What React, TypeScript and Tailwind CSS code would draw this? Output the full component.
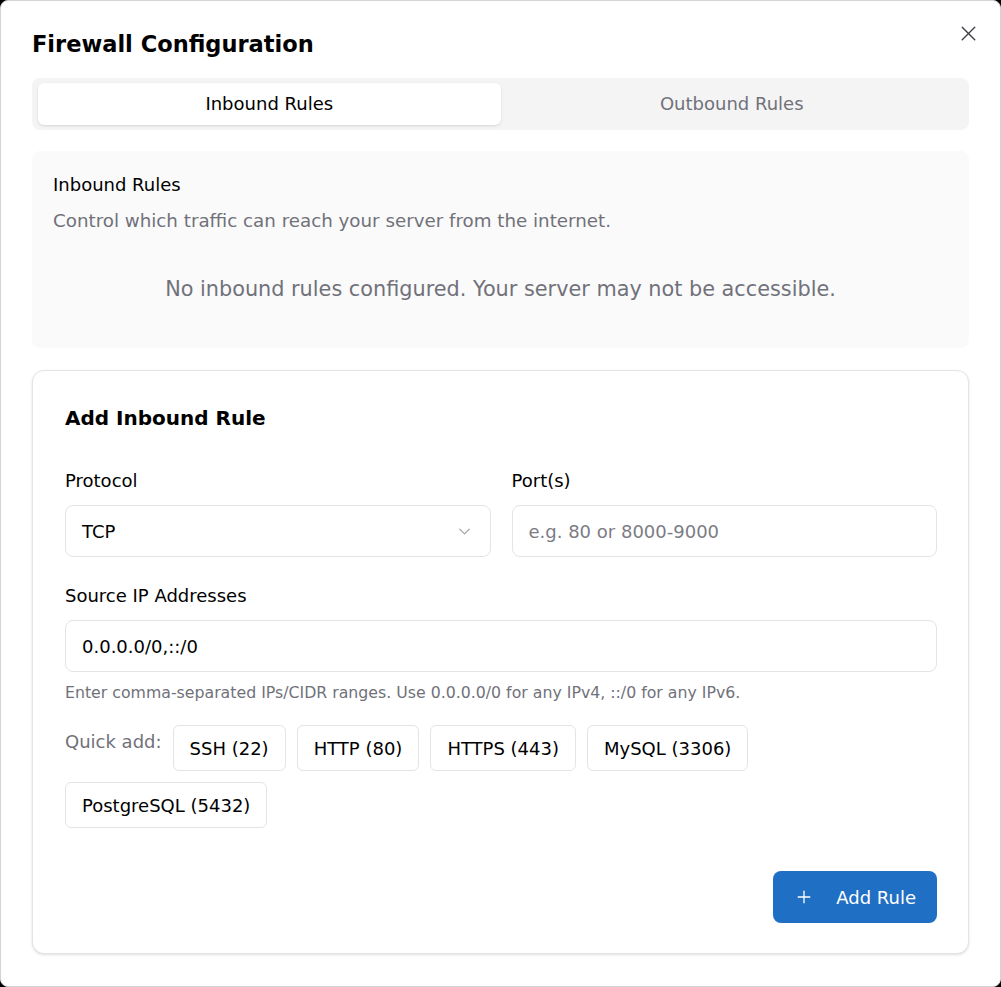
import { X, ChevronDown, Plus } from "lucide-react";

const quickAdds = ["SSH (22)", "HTTP (80)", "HTTPS (443)", "MySQL (3306)", "PostgreSQL (5432)"];

function FirewallDialog() {
  return (
    <div className="relative flex h-full flex-col rounded-lg border border-[#d4d4d8] bg-white px-[31px] pt-[28px] pb-8">
      <button className="absolute right-[19px] top-[20px] text-[#3f3f46]">
        <X size={25} strokeWidth={1.35} />
      </button>

      <h2 className="text-[22.5px] font-bold leading-[30px] text-black">Firewall Configuration</h2>

      {/* tabs */}
      <div className="mt-[19px] grid h-[52px] grid-cols-2 rounded-lg bg-[#f4f4f5] px-[6px] py-[5px]">
        <button className="rounded-md bg-white text-[18px] text-black shadow-sm">Inbound Rules</button>
        <button className="text-[18px] text-[#71717a]">Outbound Rules</button>
      </div>

      {/* current rules */}
      <div className="mt-[21px] h-[198px] rounded-lg bg-[#fafafa] px-[21px] pt-[20px]">
        <div className="text-[18px] leading-[27px] text-black">Inbound Rules</div>
        <p className="mt-[9px] text-[18.25px] leading-[27px] text-[#71717a]">
          Control which traffic can reach your server from the internet.
        </p>
        <p className="mt-[40px] text-center text-[20.8px] leading-[30px] text-[#71717a]">
          No inbound rules configured. Your server may not be accessible.
        </p>
      </div>

      {/* add rule form */}
      <div className="mt-[22px] rounded-xl border border-[#e4e4e7] bg-white pl-8 pr-[31px] pt-[33px] pb-[30px] shadow-sm">
        <h3 className="text-[20px] font-bold leading-[28px] text-black">Add Inbound Rule</h3>

        <div className="mt-[36px] grid grid-cols-2 gap-[21px]">
          <div>
            <label className="block text-[18px] leading-[26px] text-black">Protocol</label>
            <div className="mt-[11px] flex h-[52px] items-center justify-between rounded-lg border border-[#e4e4e7] px-4">
              <span className="text-[18px] text-black">TCP</span>
              <ChevronDown size={19} strokeWidth={1.5} className="text-[#a1a1aa]" />
            </div>
          </div>
          <div>
            <label className="block text-[18px] leading-[26px] text-black">Port(s)</label>
            <input
              placeholder="e.g. 80 or 8000-9000"
              className="mt-[11px] h-[52px] w-full rounded-lg border border-[#e4e4e7] px-4 text-[18px] text-black outline-none placeholder:text-[#7c7c85]"
            />
          </div>
        </div>

        <label className="mt-[26px] block text-[18px] leading-[26px] text-black">Source IP Addresses</label>
        <input
          defaultValue="0.0.0.0/0,::/0"
          className="mt-[11px] h-[52px] w-full rounded-lg border border-[#e4e4e7] px-4 text-[18px] text-black outline-none"
        />
        <p className="mt-[10px] text-[15.75px] leading-[22px] text-[#71717a]">
          Enter comma-separated IPs/CIDR ranges. Use 0.0.0.0/0 for any IPv4, ::/0 for any IPv6.
        </p>

        <div className="mt-[21px] flex flex-wrap gap-x-[11px] gap-y-[11px]">
          <span className="pt-[4px] text-[18px] leading-[26px] text-[#71717a]">Quick add:</span>
          {quickAdds.map((q) => (
            <button
              key={q}
              className="h-[46px] rounded-md border border-[#e4e4e7] bg-white px-4 text-[18px] text-black"
            >
              {q}
            </button>
          ))}
        </div>

        <div className="mt-[43px] flex justify-end">
          <button className="flex h-[52px] items-center gap-[22px] rounded-lg bg-[#1f6fc5] px-[21px] text-[18px] text-white">
            <Plus size={20} strokeWidth={1.6} />
            Add Rule
          </button>
        </div>
      </div>
    </div>
  );
}

export default function App() {
  return (
    <div className="h-[987px] w-full bg-black font-['DejaVu_Sans',sans-serif]">
      <FirewallDialog />
    </div>
  );
}
